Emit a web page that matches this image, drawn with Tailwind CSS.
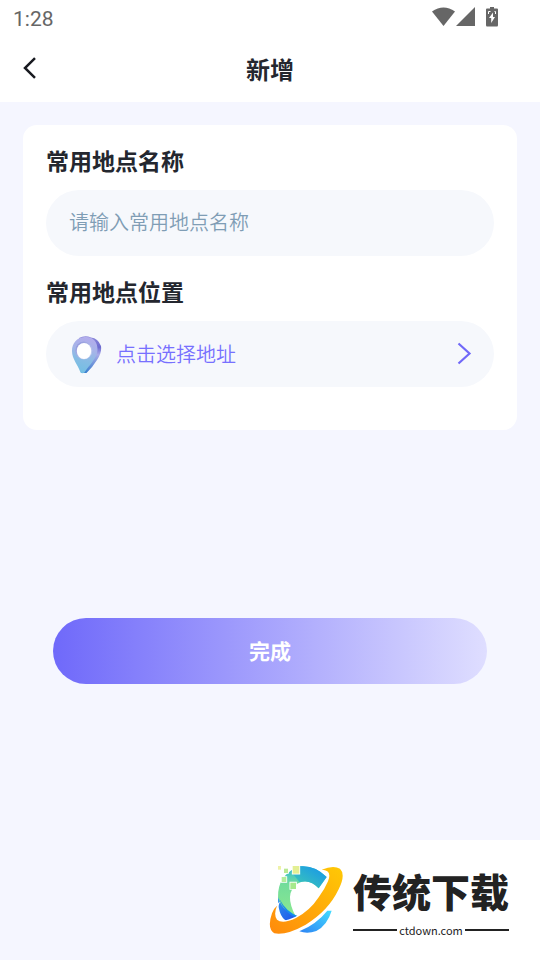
<!DOCTYPE html>
<html lang="zh-CN">
<head>
<meta charset="utf-8">
<meta name="viewport" content="width=device-width, initial-scale=1">
<title>新增</title>
<script src="https://cdn.jsdelivr.net/npm/@tailwindcss/browser@4"></script>
</head>
<body class="flex min-h-screen flex-col bg-[#f5f6ff] font-['Noto_Sans_CJK_SC',sans-serif] text-[#24272f]">
  <header class="bg-white">
    <div class="flex h-9 items-center justify-between pr-[42px] pl-[13px] text-[#666666]">
      <span class="pt-1 font-[Roboto,sans-serif] text-[21px]">1:28</span>
      <div class="flex items-center pb-[2px]">
        <svg class="h-5 w-6" viewBox="0 0 24 20" fill="currentColor" aria-label="Wi-Fi"><path d="M0 4.500Q11.500-3.500 23 4.500L11.500 19Z"/></svg>
        <svg class="h-5 w-5" viewBox="0 0 20 20" fill="currentColor" aria-label="信号"><path d="M0 19H19V0Z"/></svg>
        <svg class="ml-2.5 h-5 w-3" viewBox="0 0 12 20" fill="currentColor" aria-label="电池"><path fill-rule="evenodd" d="M4 0H8V1.500H11Q12 1.500 12 2.500V18Q12 19.500 11 19.500H1Q0 19.500 0 18V2.500Q0 1.500 1 1.500H4ZM7 5.500L3 11H5.200V16L9 10H7Z"/><path d="M2.500 7V4.500H4.500M9.500 7V4.500H8.500" fill="none" stroke="white" stroke-width="1"/></svg>
      </div>
    </div>
    <div class="grid h-[66px] grid-cols-[60px_1fr_60px] items-center">
      <button type="button" aria-label="返回" class="flex h-full items-center pb-[2px] pl-[22px]">
        <svg class="h-6 w-4" viewBox="0 0 16 24" fill="none" stroke="#181a20" stroke-width="2.500"><path d="M13 2.200L3 12L13 21.800"/></svg>
      </button>
      <h1 class="text-center text-2xl font-bold">新增</h1>
    </div>
  </header>

  <main>
    <form>
      <div class="mx-[23px] mt-[23px] rounded-[14px] bg-white px-[23px] pt-[22px] pb-[43px]">
        <label for="place-name" class="mb-[17px] block text-[23px] leading-[26px] font-bold">常用地点名称</label>
        <input id="place-name" type="text" placeholder="请输入常用地点名称" class="mb-[22px] block h-[66px] w-full rounded-full bg-[#f6f8fc] px-[23px] pb-[3px] text-xl font-[350] outline-none placeholder:text-[#7f9db5]">
        <label for="place-address" class="mb-[17px] block text-[23px] leading-[26px] font-bold">常用地点位置</label>
        <button id="place-address" type="button" class="flex h-[66px] w-full items-center rounded-full bg-[#f6f8fc] pr-[22px] pl-[25px] text-xl font-[350] text-[#7770ff]">
          <svg class="mt-[2px] h-[38px] w-[31px]" viewBox="0 0 31 38" aria-hidden="true">
            <defs>
              <linearGradient id="pin-face" x1=".6" y1="0" x2=".4" y2="1"><stop offset="0" stop-color="#b3acec"/><stop offset=".35" stop-color="#a5b4e8"/><stop offset=".65" stop-color="#86bce4"/><stop offset="1" stop-color="#72bfe3"/></linearGradient>
              <linearGradient id="pin-side" x1="0" y1="0" x2="0" y2="1"><stop offset="0" stop-color="#8d8bd9"/><stop offset=".3" stop-color="#6d6bd0"/><stop offset=".5" stop-color="#a9abe8"/><stop offset="1" stop-color="#387fce"/></linearGradient>
              <linearGradient id="pin-ring" x1="0" y1="0" x2="1" y2="1"><stop offset="0" stop-color="#8b8fd8"/><stop offset="1" stop-color="#cbd9f5"/></linearGradient>
            </defs>
            <path d="M8 2Q14-1 20 1.500Q27 2 30 10Q31 17 26 24Q21 32 15.500 37H10Z" fill="url(#pin-side)"/>
            <path d="M13.500 1C22 0 27 6 26.500 14C26 23 18 29 13.500 36.500Q11.500 38 9.500 36.500C7 29 1 23 1 15C1 7 6 1.500 13.500 1Z" fill="url(#pin-face)"/>
            <ellipse cx="12.800" cy="14.500" rx="8.500" ry="9" fill="url(#pin-ring)"/>
            <ellipse cx="13" cy="15" rx="7.200" ry="8" fill="#fff"/>
          </svg>
          <span class="ml-3.5">点击选择地址</span>
          <svg class="ml-auto h-6 w-4" viewBox="0 0 16 24" fill="none" stroke="#7068f8" stroke-width="2.200" aria-hidden="true"><path d="M2.500 1.500L13.500 11.500L2.500 21.500"/></svg>
        </button>
      </div>
      <div class="px-[53px] pt-[188px]">
        <button type="submit" class="h-[66px] w-full rounded-full bg-linear-to-r/srgb from-[#6f69fa] to-[#dfdeff] text-[21px] font-bold text-white">完成</button>
      </div>
    </form>
  </main>

  <footer class="mt-auto flex h-[120px] w-[280px] items-center self-end bg-white pl-2 text-[#222]">
    <svg class="h-[72px] w-[76px] shrink-0" viewBox="24 72 228 216" aria-hidden="true">
      <defs>
        <linearGradient id="arc-top" x1="0" y1="1" x2="1" y2="0"><stop offset="0" stop-color="#42cfb0"/><stop offset="1" stop-color="#1592ed"/></linearGradient>
        <linearGradient id="arc-left" x1="0" y1="0" x2="0" y2="1"><stop offset="0" stop-color="#28b7dc"/><stop offset=".35" stop-color="#72dc9b"/><stop offset="1" stop-color="#8ce98f"/></linearGradient>
        <linearGradient id="arc-deep" x1="0" y1="0" x2="1" y2="1"><stop offset="0" stop-color="#2c93ee"/><stop offset="1" stop-color="#2049e8"/></linearGradient>
        <linearGradient id="arc-low" x1="0" y1="1" x2="1" y2="0"><stop offset="0" stop-color="#2d83f4"/><stop offset="1" stop-color="#43dcff"/></linearGradient>
        <linearGradient id="orbit" x1="0" y1="1" x2="1" y2="0"><stop offset="0" stop-color="#ff8a0c"/><stop offset="1" stop-color="#ffc905"/></linearGradient>
      </defs>
      <path d="M118 79Q164 74 200 111L176 145Q146 112 112 131Q70 160 108 231Q57 220 54 173Q52 105 118 79Z" fill="url(#arc-left)"/>
      <path d="M118 79Q164 74 200 111L176 145Q150 117 119 127L92 94Z" fill="url(#arc-top)"/>
      <path d="M54 172Q69 220 120 232L91 246Q54 242 54 172Z" fill="url(#arc-deep)"/>
      <path d="M58 176Q78 217 120 231L112 235Q72 220 58 176Z" fill="#1689ed"/>
      <path d="M118 274Q170 252 202 212H215Q202 255 169 273Q142 283 118 274Z" fill="url(#arc-low)"/>
      <path d="M185 89Q220 74 240 86Q258 103 236 148Q205 213 137 254Q78 287 43 280Q20 266 36 220Q41 205 51 197Q40 225 51 239Q67 254 108 234Q150 212 176 172Q194 148 204 124Q213 102 202 94Q196 90 185 89Z" fill="url(#orbit)" stroke="white" stroke-width="8" paint-order="stroke"/>
      <g stroke="white" stroke-width="5" paint-order="stroke"><path d="M98 78H118V101H98Z" fill="#e3ef93"/><path d="M72 86H84V99H72Z" fill="#b9e993"/><path d="M65 111H79V126H65Z" fill="#b2ed9c"/><path d="M91 128H108V147H91Z" fill="#a6e98c"/><path d="M54 78H63V89H54Z" fill="#eef2a8"/></g>
    </svg>
    <div class="ml-[9px] w-[156px]">
      <div class="text-[39px] leading-[56px] font-black whitespace-nowrap">传统下载</div>
      <div class="mt-1 flex items-center gap-[2px] leading-4">
        <span class="h-[2px] flex-1 bg-[#222]"></span>
        <span class="text-[11px]">ctdown.com</span>
        <span class="h-[2px] flex-1 bg-[#222]"></span>
      </div>
    </div>
  </footer>
</body>
</html>
